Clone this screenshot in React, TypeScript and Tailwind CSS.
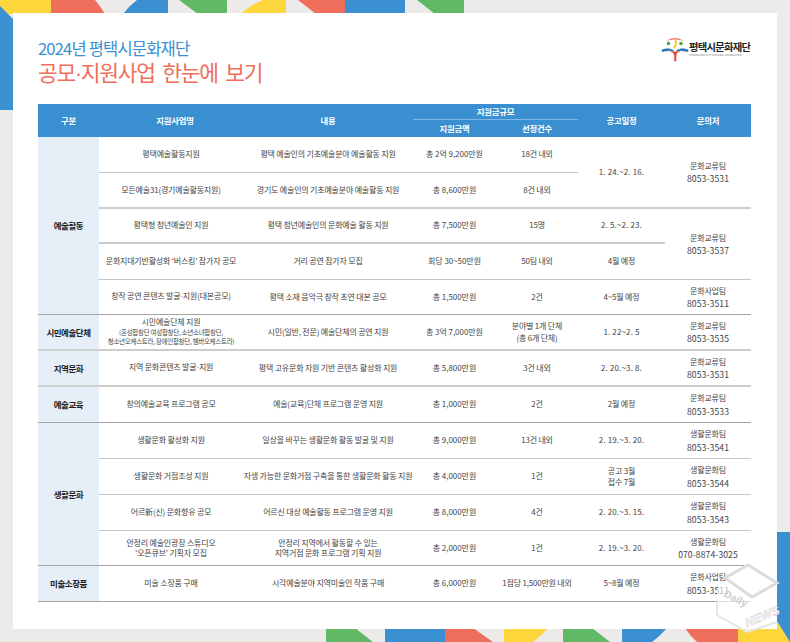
const font = "[font-family:'Noto_Sans_CJK_KR','Noto_Sans',sans-serif]";
const dotFont = "[font-family:'Liberation_Sans',sans-serif]";

const line = "border-b border-[#c6c6c6]";
const dark = "border-b border-[#a4a4a4]";
const thick = "border-b-2 border-[#cdcdcd]";
const amount = "tracking-[-0.05px]";
const date = "tracking-[0.15px]";

function Cell({ children, rowSpan, b = line, lead = "leading-[10.5px]", cls = "" }: { children: React.ReactNode; rowSpan?: number; b?: string; lead?: string; cls?: string }) {
  return (
    <td rowSpan={rowSpan} className={`${b} ${lead} ${cls} px-0 py-0 text-center align-middle`}>
      {children}
    </td>
  );
}

function Group({ children, rowSpan, b = dark }: { children: React.ReactNode; rowSpan?: number; b?: string }) {
  return (
    <td rowSpan={rowSpan} className={`${b} bg-[#e6eef8] text-center align-middle text-[8.5px] font-bold tracking-[-0.45px] text-[#222]`}>
      {children}
    </td>
  );
}

function Contact({ team, phone, rowSpan, b = line }: { team: string; phone: string; rowSpan?: number; b?: string }) {
  return (
    <td rowSpan={rowSpan} className={`${b} text-center align-middle leading-[13.5px]`}>
      {team}
      <br />
      <span className="text-[8.6px] tracking-[0.1px]">{phone}</span>
    </td>
  );
}

function Background() {
  return (
    <svg className="absolute inset-0" width="790" height="642" viewBox="0 0 790 642">
      <path d="M0 0H51V14H0Z" fill="#fdd63c" />
      <path d="M0 6L13 19V110H0Z" fill="#3a90d0" />
      <path d="M51 0H95Q101 7 105 14H51Z" fill="#ef6e5c" />
      <path d="M137 0H168V14H123Q129 6 137 0Z" fill="#3a90d0" />
      <path d="M179 0H227V14H198Z" fill="#61b966" />
      <path d="M263 0H286V14H241Q249 6 263 0Z" fill="#fdd63c" />
      <path d="M298 0H345V14H316Z" fill="#ef6e5c" />
      <path d="M345 0H405V14H345Z" fill="#3a90d0" />
      <path d="M417 0H464V14H435Z" fill="#61b966" />
      <path d="M326 628H355L373 642H326Z" fill="#61b966" />
      <path d="M385 628H445V642H385Z" fill="#3a90d0" />
      <path d="M445 628H473L493 642H445Z" fill="#ef6e5c" />
      <path d="M504 628H548Q541 636 533 642H504Z" fill="#fdd63c" />
      <path d="M563 628H592L610 642H563Z" fill="#61b966" />
      <path d="M622 628H667Q660 636 652 642H622Z" fill="#3a90d0" />
      <path d="M685 628H738V642H697Q690 636 685 628Z" fill="#ef6e5c" />
      <path d="M738 620H777L790 642H738Z" fill="#fdd63c" />
      <path d="M777 532H790V642L777 621Z" fill="#3a90d0" />
    </svg>
  );
}

function Logo() {
  return (
    <div className="-mt-[2px] flex items-center">
      <svg width="28" height="26" viewBox="0 0 28 26">
        <path d="M5 5Q14 -1 23 5Q14 2 5 5Z" fill="#ef7b5c" />
        <circle cx="7.5" cy="7.5" r="1.8" fill="#4aa84a" />
        <circle cx="20" cy="7.5" r="1.8" fill="#4aa84a" />
        <path d="M14.5 4Q16 9 12.5 12" stroke="#f6c321" strokeWidth="1.8" fill="none" />
        <path d="M1 14Q8 11 13 15Q8 14 1 15.5Z" fill="#1f6fb5" stroke="#1f6fb5" strokeWidth="0.6" />
        <path d="M27 14Q20 11 15 15Q20 14 27 15.5Z" fill="#1f6fb5" stroke="#1f6fb5" strokeWidth="0.6" />
        <path d="M9 15Q13 16 13.5 20V25H15V20Q15 16 19 15Q14 17 9 15Z" fill="#e5412a" stroke="#e5412a" strokeWidth="0.5" />
      </svg>
      <div className="-mt-[1px] w-[62px]">
        <div className="text-[10.3px] font-bold leading-[12px] tracking-[-0.72px] whitespace-nowrap text-[#222]">평택시문화재단</div>
        <div className="mt-[1px] text-[2.6px] leading-[3px] whitespace-nowrap text-[#777]">PYEONGTAEK CITY CULTURAL FOUNDATION</div>
      </div>
    </div>
  );
}

function Watermark() {
  return (
    <svg className="absolute left-[712px] top-[560px]" width="72" height="78" viewBox="0 0 72 78">
      <path d="M36 5L65 23V62L35 72L5 55V30Z" fill="#ffffff" fillOpacity="0.62" />
      <path d="M36 5L65 23L40 37L13 18Z" fill="#ffffff" fillOpacity="0.8" stroke="#dcdcdc" strokeWidth="3" />
      <path d="M5 40V55L35 72L65 62" fill="none" stroke="#e6e6e6" strokeWidth="2" />
      <text x="11" y="36" transform="rotate(27 11 36)" fontSize="10.5" fontWeight="700" fill="#cfcfcf" fontFamily="'Liberation Sans',sans-serif">Daily</text>
      <text x="35" y="67" transform="rotate(-22 35 67)" fontSize="12" fontWeight="700" fontStyle="italic" fill="#ffffff" stroke="#b5b5b5" strokeWidth="0.35" fontFamily="'Liberation Sans',sans-serif">NEWS</text>
    </svg>
  );
}

export default function App() {
  return (
    <div className={`${font} relative h-[642px] w-[790px] overflow-hidden bg-[#ecebe9] p-[13px]`}>
      <Background />
      <div className="relative h-[616px] w-[764px] bg-white pl-[25px] pr-[26px] pt-[25px]">
        <div className="flex h-[66px] items-start justify-between">
          <div>
            <h2 className="text-[16.5px] font-normal leading-[20px] tracking-[-0.8px] text-[#3a90d0]">2024년 평택시문화재단</h2>
            <h1 className="mt-[1px] text-[21.5px] font-normal leading-[26px] tracking-[-1.3px] [word-spacing:4px] text-[#ef6e5c]">
              공모<span className={dotFont}>·</span>지원사업 한눈에 보기
            </h1>
          </div>
          <Logo />
        </div>

        <table className="w-[713px] table-fixed border-separate border-spacing-0 text-[8px] tracking-[-0.2px] text-[#444]">
          <colgroup>
            <col className="w-[61px]" />
            <col className="w-[144px]" />
            <col className="w-[170px]" />
            <col className="w-[83px]" />
            <col className="w-[82px]" />
            <col className="w-[87px]" />
            <col className="w-[86px]" />
          </colgroup>
          <thead className="bg-[#3a8fd0] text-[8.4px] text-white">
            <tr className="h-[16px]">
              <th rowSpan={2} className="font-bold">구분</th>
              <th rowSpan={2} className="pl-[8px] font-bold">지원사업명</th>
              <th rowSpan={2} className="font-bold">내용</th>
              <th colSpan={2} className="border-b border-[#7fb7e2] font-bold">지원금규모</th>
              <th rowSpan={2} className="font-bold">공고일정</th>
              <th rowSpan={2} className="font-bold">문의처</th>
            </tr>
            <tr className="h-[17px]">
              <th className="font-bold">지원금액</th>
              <th className="font-bold">선정건수</th>
            </tr>
          </thead>
          <tbody>
            <tr className="h-[36px]">
              <Group rowSpan={5}>예술활동</Group>
              <Cell>평택예술활동지원</Cell>
              <Cell>평택 예술인의 기초예술분야 예술활동 지원</Cell>
              <Cell cls={amount}>총 2억 9,200만원</Cell>
              <Cell>18건 내외</Cell>
              <Cell rowSpan={2} b={thick} cls={date}>1. 24.~2. 16.</Cell>
              <Contact rowSpan={2} team="문화교류팀" phone="8053-3531" b={thick} />
            </tr>
            <tr className="h-[36px]">
              <Cell b={thick}>모든예술31(경기예술활동지원)</Cell>
              <Cell b={thick}>경기도 예술인의 기초예술분야 예술활동 지원</Cell>
              <Cell b={thick} cls={amount}>총 8,600만원</Cell>
              <Cell b={thick}>8건 내외</Cell>
            </tr>
            <tr className="h-[35px]">
              <Cell b={thick}>평택형 청년예술인 지원</Cell>
              <Cell b={thick}>평택 청년예술인의 문화예술 활동 지원</Cell>
              <Cell b={thick} cls={amount}>총 7,500만원</Cell>
              <Cell b={thick}>15명</Cell>
              <Cell b={thick} cls={date}>2. 5.~2. 23.</Cell>
              <Contact rowSpan={2} team="문화교류팀" phone="8053-3537" />
            </tr>
            <tr className="h-[36px]">
              <Cell>문화지대기반활성화 ‘버스킹’ 참가자 공모</Cell>
              <Cell>거리 공연 참가자 모집</Cell>
              <Cell cls={amount}>회당 30~50만원</Cell>
              <Cell>50팀 내외</Cell>
              <Cell>4월 예정</Cell>
            </tr>
            <tr className="h-[35px]">
              <Cell b={dark}>창작 공연 콘텐츠 발굴<span className={dotFont}>·</span>지원(대본공모)</Cell>
              <Cell b={dark}>평택 소재 음악극 창작 초연 대본 공모</Cell>
              <Cell b={dark} cls={amount}>총 1,500만원</Cell>
              <Cell b={dark}>2건</Cell>
              <Cell b={dark}>4~5월 예정</Cell>
              <Contact team="문화사업팀" phone="8053-3511" b={dark} />
            </tr>
            <tr className="h-[36px]">
              <Group b={thick}>시민예술단체</Group>
              <Cell b={thick}>
                시민예술단체 지원
                <br />
                <span className="block text-[6.5px] leading-[9.5px] tracking-[-0.3px] whitespace-nowrap">
                  (혼성합창단 여성합창단, 소년소녀합창단,
                  <br />
                  청소년오케스트라, 장애인합창단, 챔버오케스트라)
                </span>
              </Cell>
              <Cell b={thick}>시민(일반, 전문) 예술단체의 공연 지원</Cell>
              <Cell b={thick} cls={amount}>총 3억 7,000만원</Cell>
              <Cell b={thick} lead="leading-[12px]">
                분야별 1개 단체
                <br />
                (총 6개 단체)
              </Cell>
              <Cell b={thick} cls={date}>1. 22~2. 5</Cell>
              <Contact team="문화교류팀" phone="8053-3535" b={thick} />
            </tr>
            <tr className="h-[36px]">
              <Group b={thick}>지역문화</Group>
              <Cell b={thick}>지역 문화콘텐츠 발굴<span className={dotFont}>·</span>지원</Cell>
              <Cell b={thick}>평택 고유문화 자원 기반 콘텐츠 활성화 지원</Cell>
              <Cell b={thick} cls={amount}>총 5,800만원</Cell>
              <Cell b={thick}>3건 내외</Cell>
              <Cell b={thick} cls={date}>2. 20.~3. 8.</Cell>
              <Contact team="문화교류팀" phone="8053-3531" b={thick} />
            </tr>
            <tr className="h-[36px]">
              <Group b={dark}>예술교육</Group>
              <Cell b={dark}>창의예술교육 프로그램 공모</Cell>
              <Cell b={dark}>예술(교육)단체 프로그램 운영 지원</Cell>
              <Cell b={dark} cls={amount}>총 1,000만원</Cell>
              <Cell b={dark}>2건</Cell>
              <Cell b={dark}>2월 예정</Cell>
              <Contact team="문화교류팀" phone="8053-3533" b={dark} />
            </tr>
            <tr className="h-[36px]">
              <Group rowSpan={4}>생활문화</Group>
              <Cell>생활문화 활성화 지원</Cell>
              <Cell>일상을 바꾸는 생활문화 활동 발굴 및 지원</Cell>
              <Cell cls={amount}>총 9,000만원</Cell>
              <Cell>13건 내외</Cell>
              <Cell cls={date}>2. 19.~3. 20.</Cell>
              <Contact team="생활문화팀" phone="8053-3541" />
            </tr>
            <tr className="h-[36px]">
              <Cell>생활문화 거점조성 지원</Cell>
              <Cell>자생 가능한 문화거점 구축을 통한 생활문화 활동 지원</Cell>
              <Cell cls={amount}>총 4,000만원</Cell>
              <Cell>1건</Cell>
              <Cell>
                공고 3월
                <br />
                접수 7월
              </Cell>
              <Contact team="생활문화팀" phone="8053-3544" />
            </tr>
            <tr className="h-[36px]">
              <Cell>어르新(신) 문화향유 공모</Cell>
              <Cell>어르신 대상 예술활동 프로그램 운영 지원</Cell>
              <Cell cls={amount}>총 8,000만원</Cell>
              <Cell>4건</Cell>
              <Cell cls={date}>2. 20.~3. 15.</Cell>
              <Contact team="생활문화팀" phone="8053-3543" />
            </tr>
            <tr className="h-[35px]">
              <Cell b={dark}>
                안정리 예술인광장 스튜디오
                <br />
                ‘오픈큐브’ 기획자 모집
              </Cell>
              <Cell b={dark}>
                안정리 지역에서 활동할 수 있는
                <br />
                지역거점 문화 프로그램 기획 지원
              </Cell>
              <Cell b={dark} cls={amount}>총 2,000만원</Cell>
              <Cell b={dark}>1건</Cell>
              <Cell b={dark} cls={date}>2. 19.~3. 20.</Cell>
              <Contact team="생활문화팀" phone="070-8874-3025" b={dark} />
            </tr>
            <tr className="h-[36px]">
              <Group>미술소장품</Group>
              <Cell b={dark}>미술 소장품 구매</Cell>
              <Cell b={dark}>시각예술분야 지역미술인 작품 구매</Cell>
              <Cell b={dark} cls={amount}>총 6,000만원</Cell>
              <Cell b={dark}>1점당 1,500만원 내외</Cell>
              <Cell b={dark}>5~8월 예정</Cell>
              <Contact team="문화사업팀" phone="8053-3511" b={dark} />
            </tr>
          </tbody>
        </table>
      </div>
      <Watermark />
    </div>
  );
}
